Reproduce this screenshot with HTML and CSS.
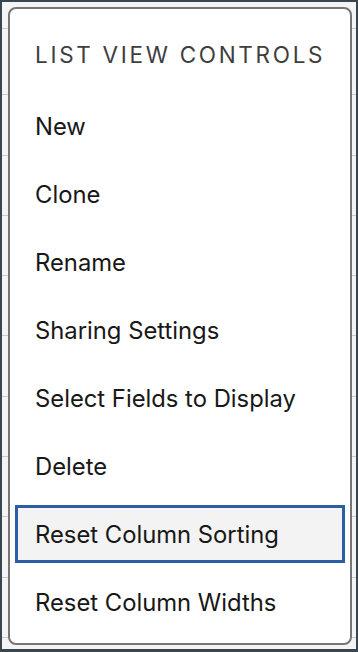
FILE: index.html
```html
<!DOCTYPE html>
<html lang="en">
<head>
  <meta charset="UTF-8" />
  <meta name="viewport" content="width=device-width, initial-scale=1.0"/>
  <title>List View Controls</title>
  <link rel="stylesheet" href="styles.css">
</head>
<body>
  <div class="backdrop">
    <div class="dropdown" role="menu">
      <h2 class="dropdown-title">List View Controls</h2>
      <ul class="menu-list">
        <li class="menu-item">New</li>
        <li class="menu-item">Clone</li>
        <li class="menu-item">Rename</li>
        <li class="menu-item">Sharing Settings</li>
        <li class="menu-item">Select Fields to Display</li>
        <li class="menu-item">Delete</li>
        <li class="menu-item focused">Reset Column Sorting</li>
        <li class="menu-item">Reset Column Widths</li>
      </ul>
    </div>
  </div>
</body>
</html>
```

FILE: styles.css
```css
* {
  box-sizing: border-box;
}

html,
body {
  height: 100%;
}

body {
  margin: 0;
  padding: 2px 2px 3px 2px;
  background: #39464f;
  font-family: Inter, "Noto Sans", sans-serif;
}

.backdrop {
  height: 100%;
  padding: 5px 4px 4px 6px;
  background:
    linear-gradient(#c9c9c9, #c9c9c9) 0 26px / 100% 1px no-repeat,
    repeating-linear-gradient(to bottom, transparent 0, transparent 59.3px, #c9c9c9 59.3px, #c9c9c9 60.3px) 0 33px / 100% 100% no-repeat,
    #f4f4f4;
}

.dropdown {
  height: 100%;
  background: #ffffff;
  border: 2px solid #767676;
  border-radius: 8px;
  overflow: hidden;
}

.dropdown-title {
  margin: 0;
  padding: 31px 25px 22px;
  line-height: 30px;
  font-size: 22.5px;
  font-weight: 400;
  letter-spacing: 0.12em;
  text-transform: uppercase;
  white-space: nowrap;
  color: #3e3e3e;
}

.menu-list {
  list-style: none;
  margin: 0;
  padding: 5px 5px 12px;
  display: flex;
  flex-direction: column;
  gap: 10px;
}

.menu-item {
  height: 58px;
  display: flex;
  align-items: center;
  padding-left: 17px;
  border: 3px solid transparent;
  font-size: 23.8px;
  color: #181818;
  cursor: pointer;
}

.menu-item.focused {
  border-color: #2a5fa8;
  background: #f3f3f3;
}
```
